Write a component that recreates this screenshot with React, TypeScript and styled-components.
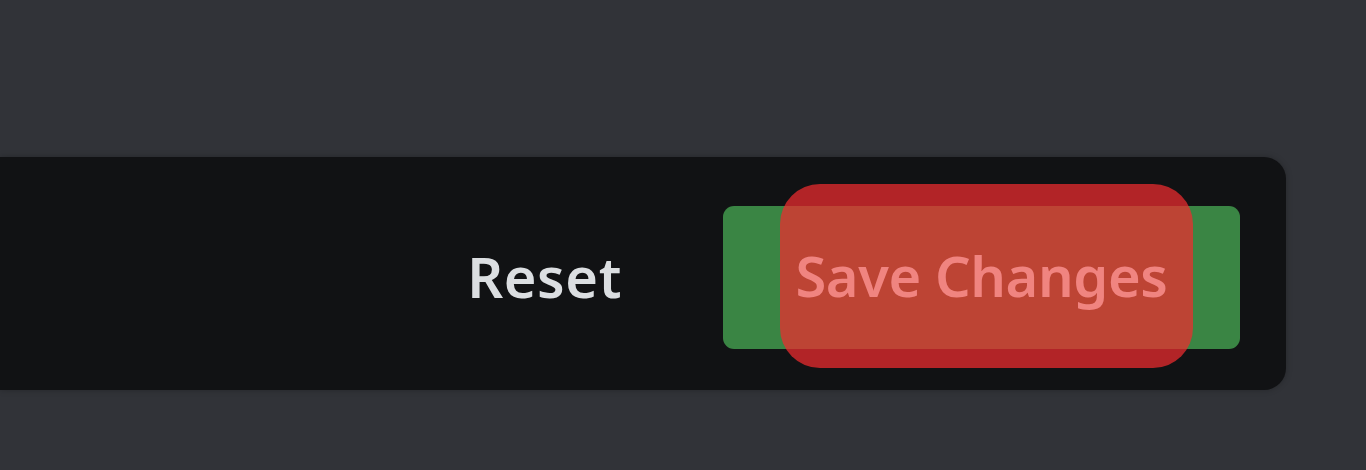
import React from "react";
import styled, { createGlobalStyle } from "styled-components";

const Global = createGlobalStyle`
  html, body { margin: 0; padding: 0; background: #313338; }
  body { font-family: "Noto Sans", "Open Sans", sans-serif; }
`;

const Page = styled.div`
  width: 1366px;
  height: 470px;
  background: #313338;
  padding: 157px 80px 0 0;
  box-sizing: border-box;
  overflow: hidden;
`;

const Bar = styled.div`
  height: 233px;
  background: #111214;
  border-radius: 0 22px 22px 0;
  display: flex;
  align-items: center;
  justify-content: flex-end;
  padding-right: 46px;
  gap: 101px;
  box-shadow: 0 0 6px rgba(0, 0, 0, 0.25);
`;

const Reset = styled.button`
  background: none;
  border: 0;
  padding: 0;
  margin-top: 4px;
  font-family: "Noto Sans", sans-serif;
  font-weight: 600;
  font-size: 56px;
  letter-spacing: 0.6px;
  color: #dbdee1;
  cursor: pointer;
`;

const Save = styled.button`
  position: relative;
  width: 517px;
  height: 143px;
  margin-top: 7px;
  border: 0;
  border-radius: 11px;
  background: #3a8544;
  padding: 0;
  cursor: pointer;
`;

const Highlight = styled.span`
  position: absolute;
  left: 57px;
  top: -22px;
  width: 413px;
  height: 184px;
  border-radius: 40px;
  background: rgba(238, 44, 46, 0.73);
`;

const SaveLabel = styled.span`
  position: relative;
  display: block;
  font-family: "Noto Sans", sans-serif;
  font-weight: 600;
  font-size: 56px;
  letter-spacing: -0.4px;
  color: #f08480;
  margin-top: -5px;
`;

export default function App() {
  return (
    <>
      <Global />
      <Page>
        <Bar>
          <Reset>Reset</Reset>
          <Save>
            <Highlight />
            <SaveLabel>Save Changes</SaveLabel>
          </Save>
        </Bar>
      </Page>
    </>
  );
}
